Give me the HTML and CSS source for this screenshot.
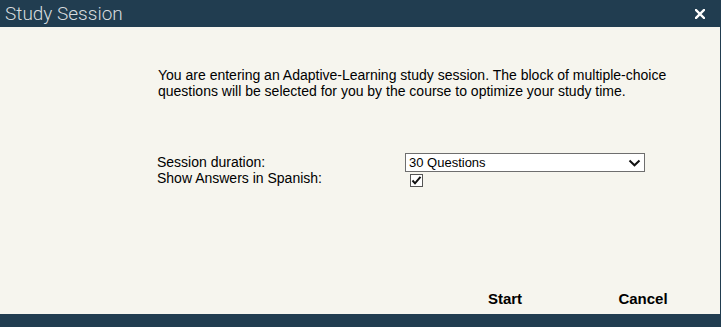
FILE: index.html
```html
<!DOCTYPE html>
<html lang="en">
  <head>
    <meta charset="UTF-8" />
    <title>Study Session</title>
    <link rel="stylesheet" href="styles.css">
  </head>
  <body>
    <div class="dialog">
      <div class="titleBar">
        <span class="title">Study Session</span>
        <span class="close">
          <svg width="10" height="10" viewBox="0 0 10 10">
            <path d="M1 1 L9 9 M9 1 L1 9" stroke="#fff" stroke-width="2.4" stroke-linecap="square" />
          </svg>
        </span>
      </div>
      <div class="content">
        <p class="intro">
          You are entering an Adaptive-Learning study session. The block of multiple-choice<br />
          questions will be selected for you by the course to optimize your study time.
        </p>
        <div class="form">
          <div class="row">
            <span class="label">Session duration:</span>
            <div class="select">
              <span>30 Questions</span>
              <svg width="13" height="8" viewBox="0 0 13 8">
                <path d="M1.5 1.5 L6.5 6.3 L11.5 1.5" fill="none" stroke="#111" stroke-width="2" />
              </svg>
            </div>
          </div>
          <div class="row row2">
            <span class="label">Show Answers in Spanish:</span>
            <span class="check">
              <svg width="11" height="11" viewBox="0 0 11 11">
                <path d="M1.5 5.5 L4 8.3 L9.5 1.8" fill="none" stroke="#111" stroke-width="2" />
              </svg>
            </span>
          </div>
        </div>
        <div class="buttons">
          <span class="btn">Start</span>
          <span class="btn">Cancel</span>
        </div>
      </div>
      <div class="bottomBar"></div>
    </div>
  </body>
</html>
```

FILE: styles.css
```css
body {
  margin: 0;
  padding: 0;
  font-family: "Liberation Sans", Arial, sans-serif;
  background: #213d50;
}
.dialog {
  width: 721px;
  height: 327px;
  display: flex;
  flex-direction: column;
}
.titleBar {
  height: 27px;
  background: #213d50;
  display: flex;
  justify-content: space-between;
  align-items: center;
  padding: 0 16px 0 5px;
}
.title {
  font-family: Roboto, "Liberation Sans", sans-serif;
  font-weight: 300;
  font-size: 19px;
  color: #d6dbdf;
  line-height: 27px;
  margin-top: -1px;
}
.close {
  display: flex;
  margin-top: 1px;
}
.content {
  height: 287px;
  background: #f6f5ee;
  border-right: 1px solid #213d50;
  display: flex;
  flex-direction: column;
  color: #000;
  font-size: 14px;
}
.intro {
  margin: 40px 0 0 158px;
  line-height: 16px;
}
.form {
  margin: 54px 0 0 157px;
}
.row {
  display: flex;
  align-items: flex-start;
}
.label {
  width: 248px;
  line-height: 16px;
  margin-top: 1px;
}
.row2 .label {
  margin-top: -4px;
}
.select {
  width: 232px;
  height: 17px;
  border: 1px solid #6e6e6e;
  background: #fff;
  display: flex;
  justify-content: space-between;
  align-items: center;
  padding: 0 3px 0 3px;
  font-size: 13px;
  line-height: 17px;
}
.row2 {
  margin-top: 2px;
}
.check {
  width: 11px;
  height: 11px;
  border: 1px solid #555;
  background: #fff;
  margin: 0 0 0 5px;
  display: flex;
}
.buttons {
  margin-top: auto;
  display: flex;
  justify-content: flex-end;
  padding: 0 8px 5px 0;
}
.btn {
  width: 138px;
  text-align: center;
  font-weight: bold;
  font-size: 15px;
  line-height: 20px;
}
.bottomBar {
  height: 13px;
  background: #213d50;
}
```
